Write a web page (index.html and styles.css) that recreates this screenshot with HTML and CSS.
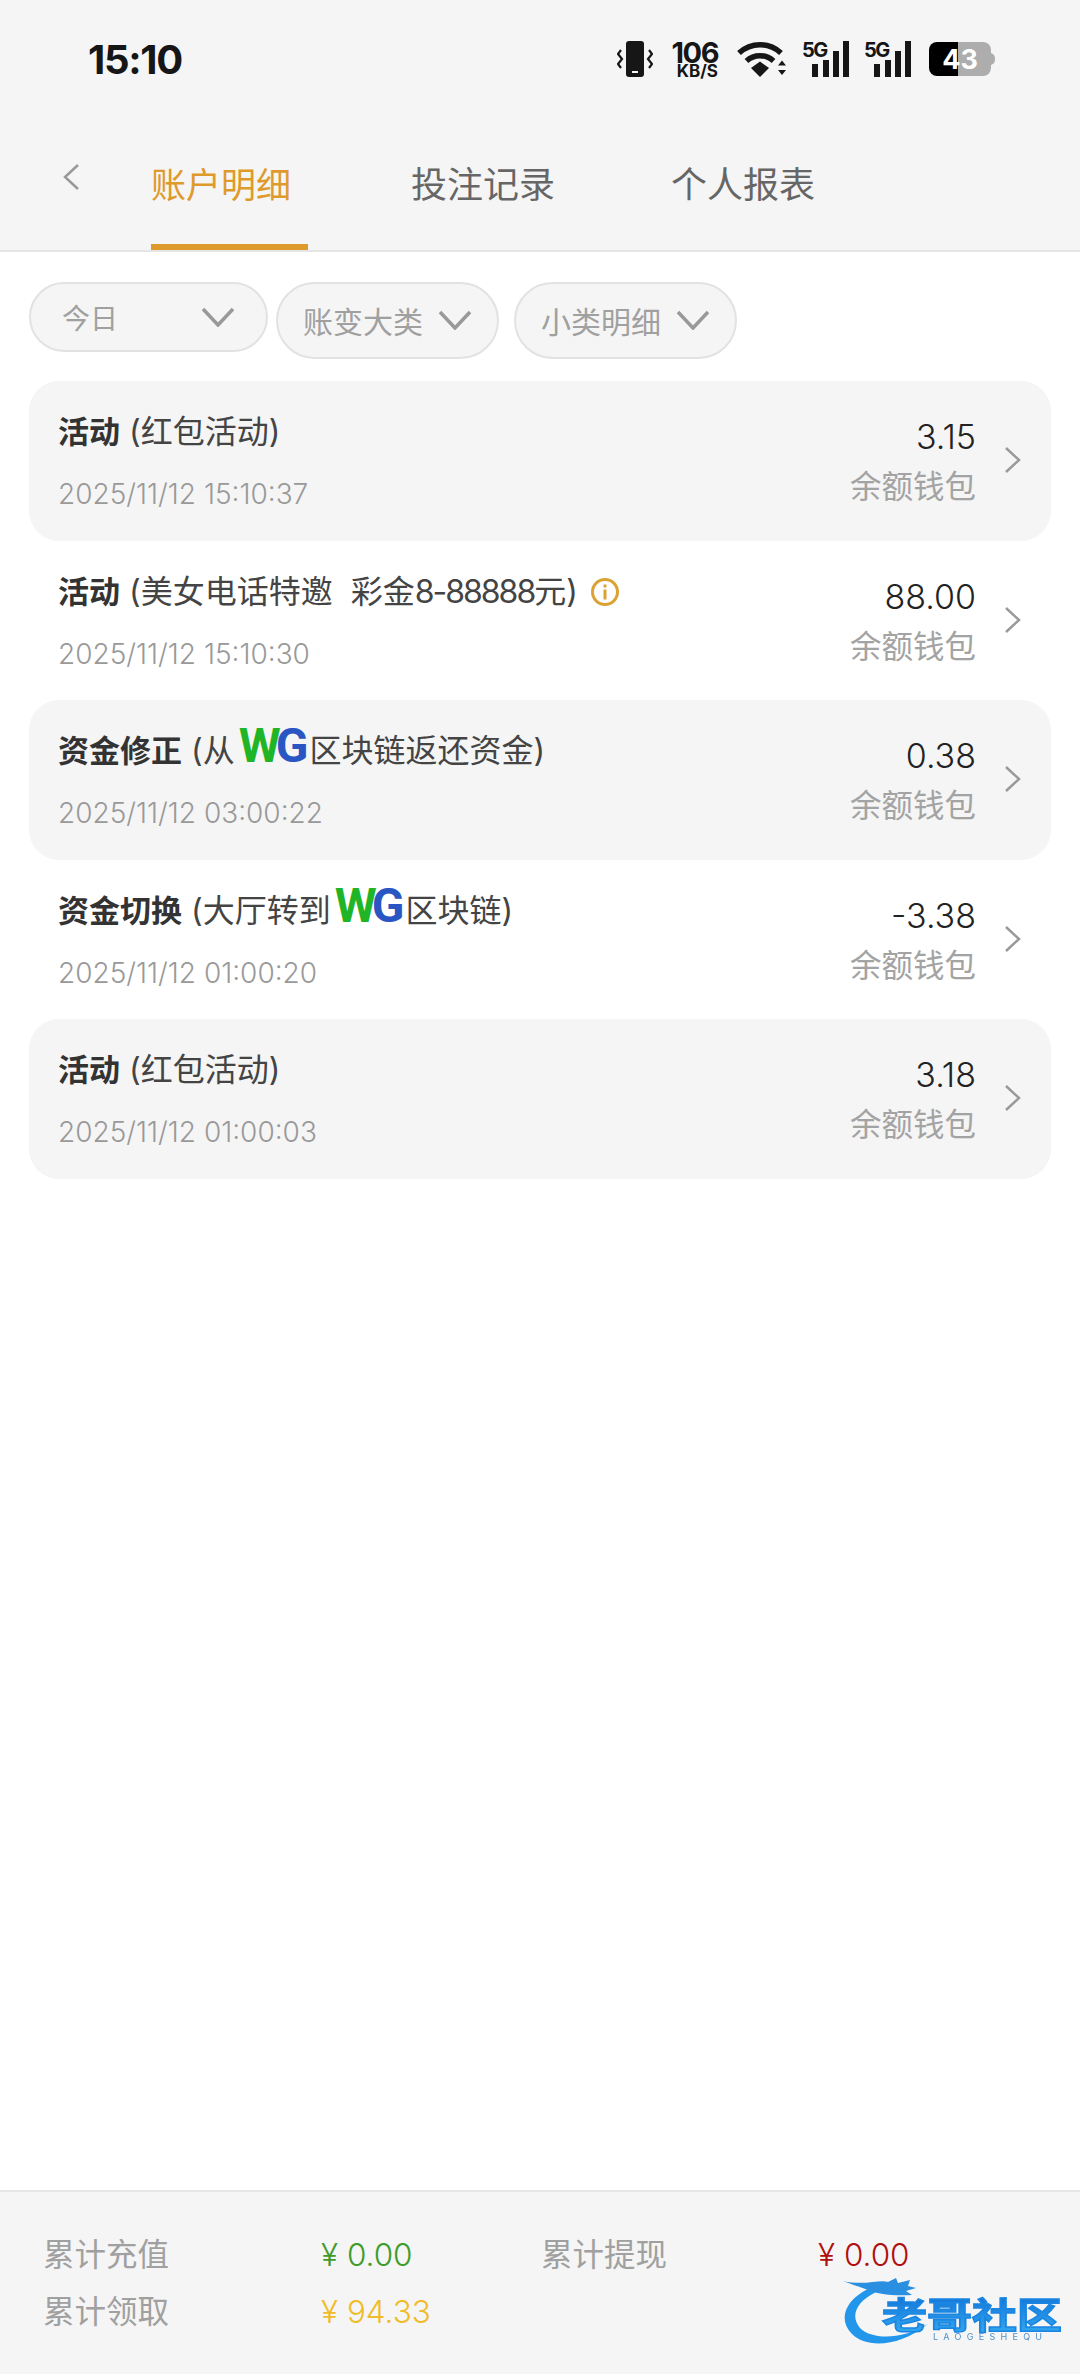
FILE: index.html
```html
<!DOCTYPE html>
<html lang="en">
<head>
    <meta charset="UTF-8">
    <meta name="viewport" content="width=device-width, initial-scale=1.0">
    <title>账户明细</title>
    <link rel="stylesheet" href="styles.css">
</head>
<body>
    <header class="top">
        <div class="status-bar">
            <span class="clock">15:10</span>
            <div class="status-icons">
                <svg class="ic-vibrate" viewBox="0 0 36 36">
                    <rect x="9" y="0" width="18" height="36" rx="3" fill="#161616"/>
                    <rect x="15" y="30" width="6" height="2" fill="#f5f5f5"/>
                    <path d="M4 9l-3 4 4 5-4 5 3 4M32 9l3 4-4 5 4 5-3 4" fill="none" stroke="#161616" stroke-width="2.200"/>
                </svg>
                <div class="speed">
                    <span class="speed-num">106</span>
                    <span class="speed-unit">KB/S</span>
                </div>
                <svg class="ic-wifi" viewBox="0 0 50 36">
                    <path d="M2 12C14 1 32 1 44 12" fill="none" stroke="#161616" stroke-width="5.500"/>
                    <path d="M9.500 20C17 13 29 13 36.500 20" fill="none" stroke="#161616" stroke-width="5.500"/>
                    <path d="M14 27L23 20.500L32 27L23 36Z" fill="#161616"/>
                    <path d="M41 24.500L45 19.500L49 24.500ZM41 29L45 34L49 29Z" fill="#161616"/>
                </svg>
                <svg class="ic-signal" viewBox="0 0 47 36">
                    <text class="sig-label" x="0" y="16">5G</text>
                    <rect x="10" y="23" width="6" height="13" fill="#161616"/>
                    <rect x="21" y="19" width="6" height="17" fill="#161616"/>
                    <rect x="31" y="10" width="6" height="26" fill="#161616"/>
                    <rect x="41" y="0" width="6" height="36" fill="#161616"/>
                </svg>
                <svg class="ic-signal" viewBox="0 0 47 36">
                    <text class="sig-label" x="0" y="16">5G</text>
                    <rect x="10" y="23" width="6" height="13" fill="#161616"/>
                    <rect x="21" y="19" width="6" height="17" fill="#161616"/>
                    <rect x="31" y="10" width="6" height="26" fill="#161616"/>
                    <rect x="41" y="0" width="6" height="36" fill="#161616"/>
                </svg>
                <svg class="ic-battery" viewBox="0 0 66 34">
                    <path d="M8 0H29V34H8A8 8 0 0 1 0 26V8A8 8 0 0 1 8 0Z" fill="#000"/>
                    <path d="M29 0H54A8 8 0 0 1 62 8V26A8 8 0 0 1 54 34H29Z" fill="#adadad"/>
                    <path d="M62 11C65 12 66 14 66 17C66 20 65 22 62 23Z" fill="#adadad"/>
                    <text class="batt-label" x="31" y="27" text-anchor="middle">43</text>
                </svg>
            </div>
        </div>
        <nav class="tabs">
            <svg class="back" viewBox="0 0 18 26"><path d="M16 1L3 13L16 25" fill="none" stroke="#999" stroke-width="2.500"/></svg>
            <a class="tab active">账户明细</a>
            <a class="tab">投注记录</a>
            <a class="tab">个人报表</a>
        </nav>
    </header>

    <div class="filters">
        <div class="pill pill-today">
            <span>今日</span>
            <svg class="caret" viewBox="0 0 34 20"><path d="M2 2L17 18L32 2" fill="none" stroke="#999" stroke-width="3.500"/></svg>
        </div>
        <div class="pill">
            <span>账变大类</span>
            <svg class="caret" viewBox="0 0 34 20"><path d="M2 2L17 18L32 2" fill="none" stroke="#999" stroke-width="3.500"/></svg>
        </div>
        <div class="pill">
            <span>小类明细</span>
            <svg class="caret" viewBox="0 0 34 20"><path d="M2 2L17 18L32 2" fill="none" stroke="#999" stroke-width="3.500"/></svg>
        </div>
    </div>

    <div class="list">
        <div class="row">
            <div class="row-main">
                <div class="row-title"><b>活动</b> (红包活动)</div>
                <div class="row-date">2025/11/12 15:10:37</div>
            </div>
            <div class="row-side">
                <div class="amount">3.15</div>
                <div class="wallet">余额钱包</div>
            </div>
            <svg class="arrow" viewBox="0 0 18 26"><path d="M2 1L15 13L2 25" fill="none" stroke="#999" stroke-width="2.500"/></svg>
        </div>
        <div class="row">
            <div class="row-main">
                <div class="row-title"><b>活动</b> (美女电话特邀&nbsp; 彩金<span class="range">8-88888</span>元)<svg class="info" viewBox="0 0 30 30">
                        <circle cx="15" cy="15" r="12.500" fill="none" stroke="#dba234" stroke-width="3"/>
                        <rect x="13.500" y="7.500" width="3" height="3" fill="#dba234"/>
                        <rect x="13.500" y="12.500" width="3" height="10" fill="#dba234"/>
                    </svg></div>
                <div class="row-date">2025/11/12 15:10:30</div>
            </div>
            <div class="row-side">
                <div class="amount">88.00</div>
                <div class="wallet">余额钱包</div>
            </div>
            <svg class="arrow" viewBox="0 0 18 26"><path d="M2 1L15 13L2 25" fill="none" stroke="#999" stroke-width="2.500"/></svg>
        </div>
        <div class="row">
            <div class="row-main">
                <div class="row-title"><b>资金修正</b> (从<span class="wg"><i>W</i><em>G</em></span>区块链返还资金)</div>
                <div class="row-date">2025/11/12 03:00:22</div>
            </div>
            <div class="row-side">
                <div class="amount">0.38</div>
                <div class="wallet">余额钱包</div>
            </div>
            <svg class="arrow" viewBox="0 0 18 26"><path d="M2 1L15 13L2 25" fill="none" stroke="#999" stroke-width="2.500"/></svg>
        </div>
        <div class="row">
            <div class="row-main">
                <div class="row-title"><b>资金切换</b> (大厅转到<span class="wg"><i>W</i><em>G</em></span>区块链)</div>
                <div class="row-date">2025/11/12 01:00:20</div>
            </div>
            <div class="row-side">
                <div class="amount">-3.38</div>
                <div class="wallet">余额钱包</div>
            </div>
            <svg class="arrow" viewBox="0 0 18 26"><path d="M2 1L15 13L2 25" fill="none" stroke="#999" stroke-width="2.500"/></svg>
        </div>
        <div class="row">
            <div class="row-main">
                <div class="row-title"><b>活动</b> (红包活动)</div>
                <div class="row-date">2025/11/12 01:00:03</div>
            </div>
            <div class="row-side">
                <div class="amount">3.18</div>
                <div class="wallet">余额钱包</div>
            </div>
            <svg class="arrow" viewBox="0 0 18 26"><path d="M2 1L15 13L2 25" fill="none" stroke="#999" stroke-width="2.500"/></svg>
        </div>
    </div>

    <footer class="totals">
        <span class="total-label">累计充值</span>
        <span class="total-value green">¥ 0.00</span>
        <span class="total-label">累计提现</span>
        <span class="total-value red">¥ 0.00</span>
        <span class="total-label">累计领取</span>
        <span class="total-value gold">¥ 94.33</span>

        <svg class="watermark" viewBox="0 0 236 84">
            <defs>
                <linearGradient id="wmFill" x1="0" y1="0" x2="0" y2="1">
                    <stop offset="0" stop-color="#1273d8"/>
                    <stop offset="1" stop-color="#35aef2"/>
                </linearGradient>
            </defs>
            <path d="M34 14C8 26 2 46 16 60C30 74 62 74 92 50C66 66 36 66 24 54C14 42 20 28 40 18Z" fill="#2196ea"/>
            <path d="M7 7C28 12 44 5 52 8L60 4L62 9L74 6L72 12L80 14L70 17L76 21C56 22 40 20 32 16C22 12 14 10 7 7Z" fill="#2a8fe0"/>
            <text class="wm-title" x="46" y="55" textLength="180" lengthAdjust="spacingAndGlyphs" fill="url(#wmFill)">老哥社区</text>
            <text class="wm-sub" x="97" y="66" textLength="109">LAOGESHEQU</text>
        </svg>
    </footer>
</body>
</html>
```

FILE: styles.css
```css
* {
    box-sizing: border-box;
}
body {
    margin: 0;
    height: 2374px;
    display: flex;
    flex-direction: column;
    background-color: #ffffff;
    color: #333;
    font-family: Inter, "Noto Sans CJK SC", sans-serif;
}
.top {
    height: 252px;
    background-color: #f5f5f5;
    border-bottom: 2px solid #e5e5e5;
}
.status-bar {
    height: 118px;
    margin-bottom: 2px;
    display: flex;
    align-items: center;
    justify-content: space-between;
    padding: 0 85px 0 88px;
}
.clock {
    font-size: 40px;
    font-weight: 700;
    letter-spacing: -1.3px;
    color: #161616;
}
.status-icons {
    display: flex;
    align-items: center;
    height: 36px;
}
.ic-vibrate {
    width: 36px;
    height: 36px;
}
.speed {
    display: flex;
    flex-direction: column;
    align-items: flex-end;
    width: 46px;
    margin-left: 19px;
    color: #161616;
    font-weight: 700;
}
.speed-num {
    font-size: 29px;
    line-height: 23px;
    letter-spacing: -1.5px;
}
.speed-unit {
    font-size: 17px;
    line-height: 14px;
}
.ic-wifi {
    width: 50px;
    height: 36px;
    margin-left: 19px;
}
.ic-signal {
    width: 47px;
    height: 36px;
    margin-left: 15px;
    overflow: visible;
}
.sig-label {
    font-size: 20px;
    font-weight: 700;
    letter-spacing: -1.5px;
    fill: #161616;
}
.ic-battery {
    width: 66px;
    height: 34px;
    margin-left: 18px;
}
.batt-label {
    font-size: 27px;
    font-weight: 700;
    fill: #fff;
}
.tabs {
    display: flex;
    position: relative;
    height: 130px;
    padding-left: 151px;
    gap: 103px;
}
.back {
    position: absolute;
    left: 62px;
    top: 44px;
    width: 18px;
    height: 26px;
}
.tab {
    width: 157px;
    height: 130px;
    padding-top: 40px;
    font-size: 36px;
    line-height: 50px;
    color: #666;
}
.tab.active {
    font-size: 35px;
    color: #de9b2c;
    border-bottom: 6px solid #de9b2c;
}
.filters {
    display: flex;
    align-items: flex-start;
    gap: 8px;
    padding: 30px 0 22px 29px;
}
.pill {
    width: 223px;
    height: 77px;
    display: flex;
    align-items: center;
    justify-content: space-between;
    padding: 0 25px 2px 25px;
    background-color: #f5f5f5;
    border: 2px solid #e2e2e2;
    border-radius: 39px;
    font-size: 30px;
    color: #a0a0a0;
}
.pill + .pill + .pill {
    margin-left: 7px;
}
.pill-today {
    width: 239px;
    height: 70px;
    padding: 0 31px 1px 31px;
    font-size: 28px;
}
.caret {
    width: 34px;
    height: 20px;
}
.list {
    padding: 0 29px;
}
.row {
    height: 159.6px;
    display: flex;
    align-items: flex-start;
    padding: 0 29px 0 29px;
    border-radius: 30px;
}
.row:nth-child(odd) {
    background-color: #f5f5f5;
}
.row-main {
    flex: 1;
    padding-top: 30px;
}
.row-title {
    height: 42px;
    font-size: 32px;
    line-height: 42px;
    white-space: nowrap;
    color: #444;
}
.row-title b {
    font-size: 31px;
    color: #333;
}
.range {
    letter-spacing: -2px;
}
.info {
    width: 30px;
    height: 30px;
    margin-left: 12px;
    vertical-align: -4px;
}
.wg {
    font-family: Roboto, sans-serif;
    font-size: 48px;
    font-weight: 700;
    line-height: 0;
    letter-spacing: -5px;
    margin: 0 6px 0 4px;
}
.wg i {
    font-style: normal;
    color: #1fb526;
}
.wg em {
    font-style: normal;
    color: #2a56c4;
}
.row-date {
    margin-top: 21px;
    font-size: 28px;
    line-height: 40px;
    font-weight: 300;
    color: #999;
}
.row-side {
    text-align: right;
    padding-top: 35px;
}
.amount {
    font-size: 34px;
    line-height: 42px;
    font-weight: 300;
    color: #222;
}
.wallet {
    margin-top: 8px;
    font-size: 31.500px;
    line-height: 42px;
    color: #a3a3a3;
}
.arrow {
    width: 18px;
    height: 26px;
    margin: 66px 0 0 28px;
}
.totals {
    position: relative;
    margin-top: auto;
    height: 184px;
    display: grid;
    grid-template-columns: 278px 220px 277px 1fr;
    grid-auto-rows: 40px;
    row-gap: 17px;
    padding: 43px 0 0 43px;
    background-color: #f5f5f5;
    border-top: 2px solid #e5e5e5;
    font-size: 31.500px;
    line-height: 40px;
}
.total-label {
    color: #a0a0a0;
}
.total-value {
    font-weight: 300;
}
.green {
    color: #3f9c2a;
}
.red {
    color: #b00f0f;
}
.gold {
    color: #f0bc2a;
}
.watermark {
    position: absolute;
    right: 8px;
    bottom: 16px;
    width: 236px;
    height: 84px;
    filter: blur(0.6px);
}
.wm-title {
    font-size: 36px;
    font-weight: 700;
    stroke: #1a86e2;
    stroke-width: 1.500px;
}
.wm-sub {
    font-size: 9px;
    fill: #4d8fc9;
}
```
